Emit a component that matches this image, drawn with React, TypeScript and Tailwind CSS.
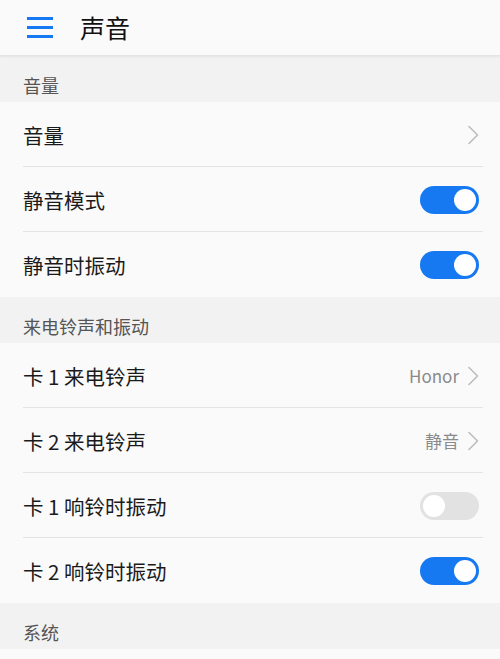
import React from 'react';

const font = { fontFamily: '"Noto Sans CJK SC", "Noto Sans", Roboto, sans-serif' };

function Chevron() {
  return (
    <svg width="12" height="20" viewBox="0 0 12 20" fill="none" className="shrink-0">
      <path d="M2 1.5 L10.5 10 L2 18.5" stroke="#bdbdbd" strokeWidth="1.6" strokeLinecap="round" strokeLinejoin="round" />
    </svg>
  );
}

function Toggle({ on }: { on: boolean }) {
  return (
    <div
      className={`w-[59px] h-[28px] rounded-full flex items-center px-[3px] ${
        on ? 'bg-[#1679f2] justify-end' : 'bg-[#e2e2e2] justify-start'
      }`}
    >
      <div className="w-[22px] h-[22px] rounded-full bg-white" />
    </div>
  );
}

type Row = { label: string; value?: string; chevron?: boolean; toggle?: boolean; on?: boolean };

function SectionHeader({ title }: { title: string }) {
  return (
    <div className="h-[46px] bg-[#f2f2f2] flex items-center pt-[12px] px-[23px] text-[18px] text-[#555]">
      {title}
    </div>
  );
}

function Rows({ rows }: { rows: Row[] }) {
  return (
    <div className="bg-[#fafafa]">
      {rows.map((r, i) => (
        <div key={r.label} className="h-[65px] flex items-center pt-[1px] pl-[23px] pr-[21px] relative">
          <span className="flex-1 text-[20.5px] text-[#1a1a1a]">{r.label}</span>
          {r.value && <span className="text-[17px] text-[#8a8a8a] mr-[8px]">{r.value}</span>}
          {r.chevron && <Chevron />}
          {r.toggle && <Toggle on={!!r.on} />}
          {i < rows.length - 1 && (
            <div className="absolute bottom-0 left-[23px] right-[17px] h-px bg-[#e3e3e3]" />
          )}
        </div>
      ))}
    </div>
  );
}

export default function App() {
  return (
    <div className="w-[500px] h-[659px] bg-[#fafafa] overflow-hidden" style={font}>
      {/* Header */}
      <div className="h-[56px] bg-[#fafafa] flex items-center border-b border-[#e4e4e4] shadow-[0_1px_2px_rgba(0,0,0,0.06)] relative z-10">
        <div className="w-[26px] ml-[27px] flex flex-col gap-[6.5px]">
          <div className="h-[2.5px] bg-[#1679f2]" />
          <div className="h-[2.5px] bg-[#1679f2]" />
          <div className="h-[2.5px] bg-[#1679f2]" />
        </div>
        <span className="ml-[27px] text-[25px] text-[#111] leading-none">声音</span>
      </div>

      <SectionHeader title="音量" />
      <Rows
        rows={[
          { label: '音量', chevron: true },
          { label: '静音模式', toggle: true, on: true },
          { label: '静音时振动', toggle: true, on: true },
        ]}
      />

      <SectionHeader title="来电铃声和振动" />
      <Rows
        rows={[
          { label: '卡 1 来电铃声', value: 'Honor', chevron: true },
          { label: '卡 2 来电铃声', value: '静音', chevron: true },
          { label: '卡 1 响铃时振动', toggle: true, on: false },
          { label: '卡 2 响铃时振动', toggle: true, on: true },
        ]}
      />

      <SectionHeader title="系统" />
    </div>
  );
}
